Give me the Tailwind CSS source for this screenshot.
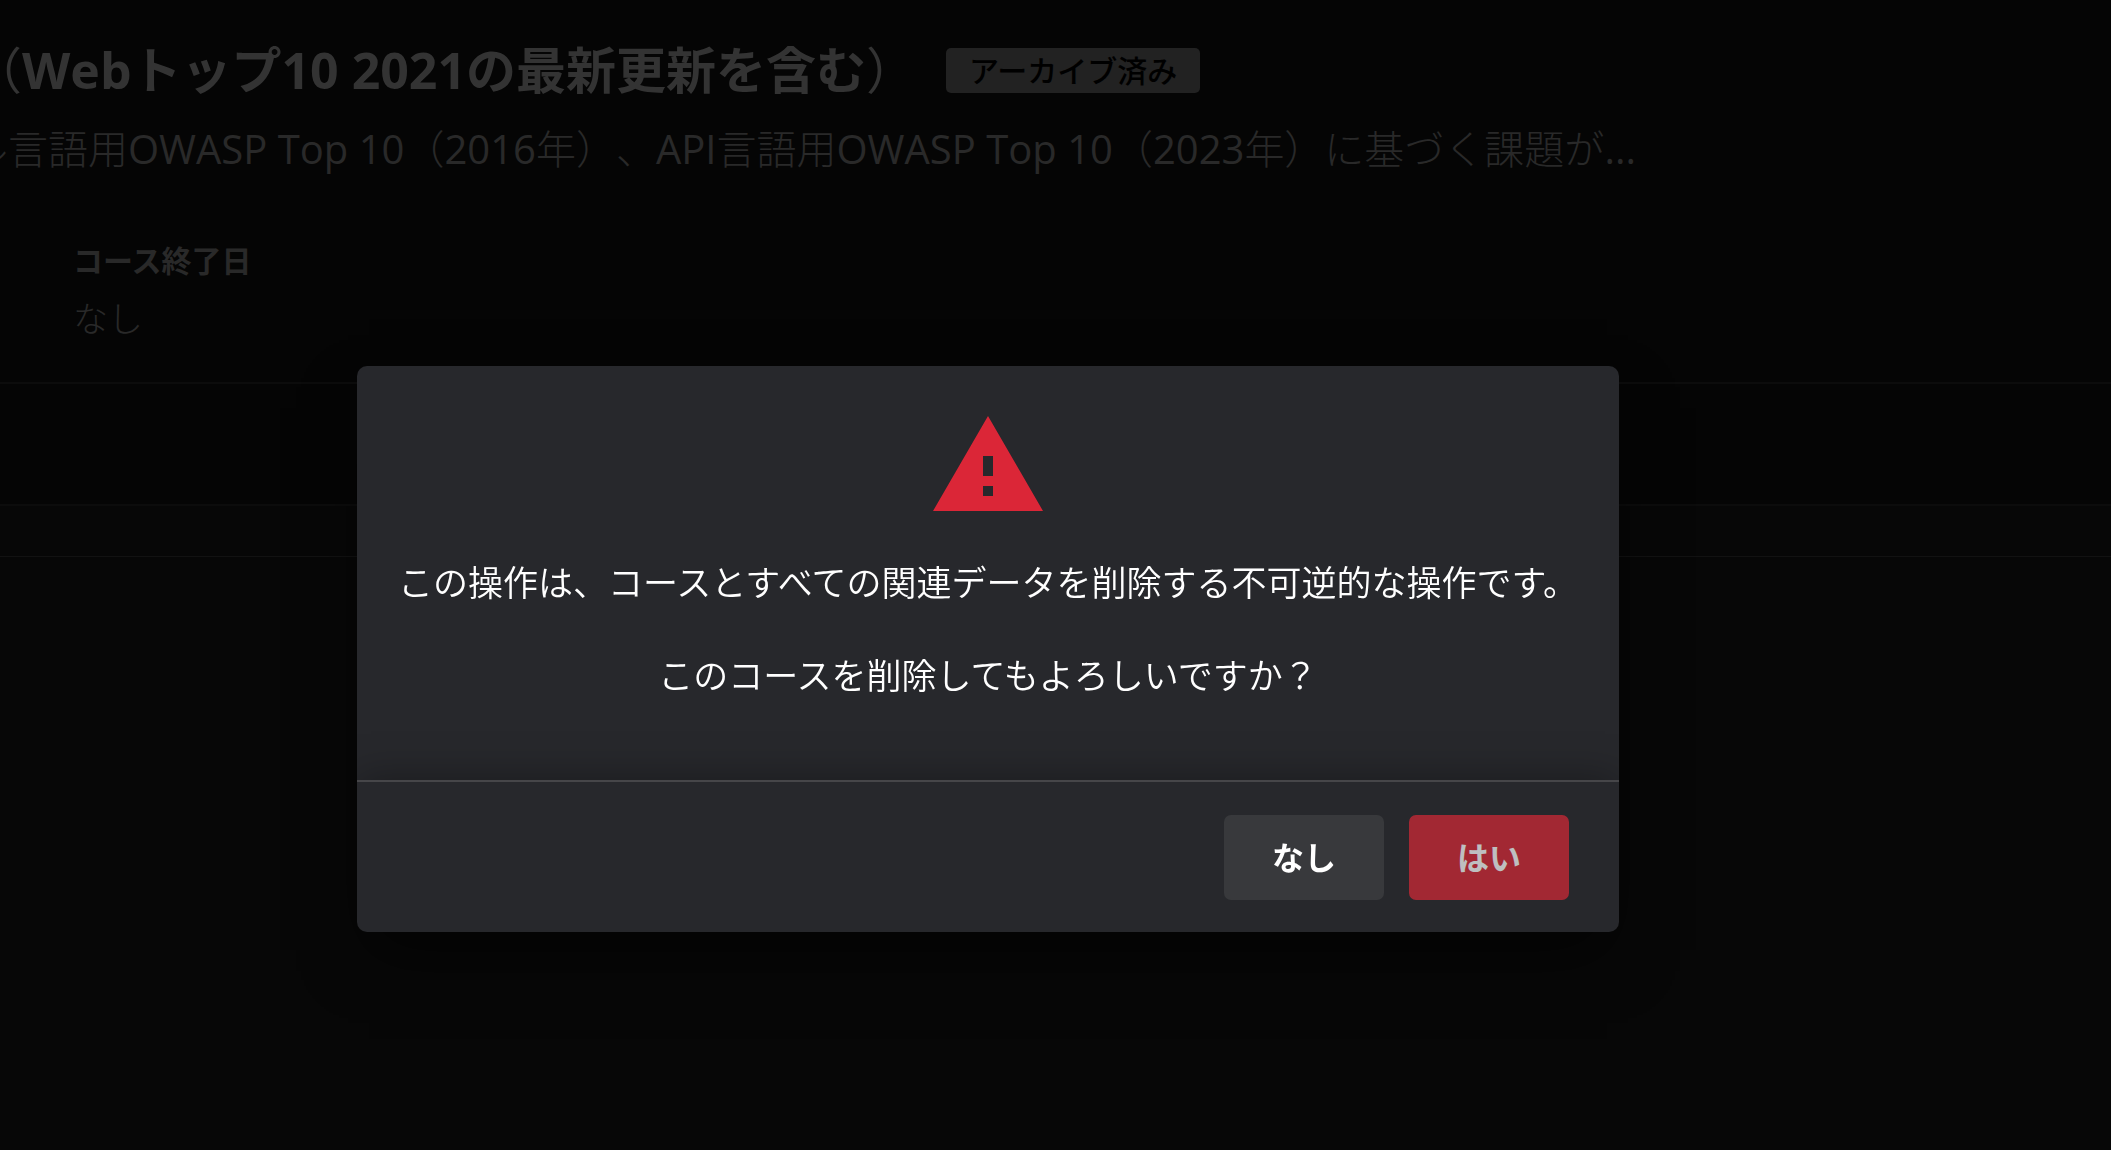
<!DOCTYPE html>
<html lang="ja">
<head>
    <meta charset="UTF-8">
    <meta name="viewport" content="width=device-width, initial-scale=1.0">
    <title>コースの削除</title>

    <!-- Tailwind CSS for styling -->
    <script src="https://cdn.jsdelivr.net/npm/@tailwindcss/browser@4"></script>
</head>
<body class="bg-[#070707] text-[#292929] min-h-screen overflow-x-hidden font-['Open_Sans','Noto_Sans_CJK_JP',sans-serif] [text-spacing-trim:space-all]">

    <!-- Course page behind the dialog -->
    <main>
        <header class="bg-[#050505] border-b-2 border-[#0c0c0c] pt-8 pb-[35px] overflow-hidden">
            <div class="flex items-center gap-[30px] h-[76px] -ml-7 text-[#333333]">
                <h1 class="text-[50px] leading-[76px] font-bold whitespace-nowrap"><span class="font-normal">（</span>Webトップ10 2021の最新更新を含む<span class="font-normal">）</span></h1>
                <span class="bg-[#222222] text-black text-[30px] leading-[45px] font-medium px-[23px] rounded-[5px] whitespace-nowrap">アーカイブ済み</span>
            </div>
            <p class="-ml-8 mt-[11px] text-[40px] leading-[60px] font-light whitespace-nowrap">ル言語用<span class="font-normal">OWASP Top 10</span>（<span class="font-normal">2016</span>年）、<span class="font-normal">API</span>言語用<span class="font-normal">OWASP Top 10</span>（<span class="font-normal">2023</span>年）に基づく課題が<span class="font-normal">...</span></p>
            <dl class="mt-[58px] ml-[73px]">
                <dt class="text-[30px] leading-[48px] font-bold">コース終了日</dt>
                <dd class="mt-1.5 text-[35px] leading-[56px] font-light">なし</dd>
            </dl>
        </header>
        <div class="h-[122px] bg-[#050505] border-b-2 border-[#0c0c0c]"></div>
        <div class="h-[51px] border-b border-[#121212]"></div>
    </main>

    <!-- Delete confirmation -->
    <div class="fixed inset-0 flex justify-center items-start pt-[366px] pr-[135px]">
        <div role="alertdialog" aria-modal="true" aria-describedby="delete-message" class="w-[1262px] max-w-full bg-[#27282c] text-white rounded-[10px] overflow-hidden shadow-[0_30px_60px_-12px_rgba(0,0,0,0.6)]">
            <div id="delete-message" class="flex flex-col items-center pt-10 pb-[78px] text-[35px] leading-[53px] font-[350] text-center">
                <svg class="size-[120px] text-[#db2637]" viewBox="0 0 24 24" fill="currentColor" aria-hidden="true">
                    <path d="M1 21h22L12 2 1 21zm12-3h-2v-2h2v2zm0-4h-2v-4h2v4z"/>
                </svg>
                <p class="mt-[30px] whitespace-nowrap">この操作は、コースとすべての関連データを削除する不可逆的な操作です。</p>
                <p class="mt-10 whitespace-nowrap">このコースを削除してもよろしいですか？</p>
            </div>
            <div class="flex justify-end gap-[25px] border-t-2 border-[#464649] pt-[33px] pb-8 px-[50px] shadow-[0_0_40px_rgba(0,0,0,0.35)]">
                <button type="button" class="w-[160px] h-[85px] rounded-[7px] bg-[#38393c] text-[32px] font-bold">なし</button>
                <button type="button" class="w-[160px] h-[85px] rounded-[7px] bg-[#d82837] text-[32px] font-bold opacity-70">はい</button>
            </div>
        </div>
    </div>

</body>
</html>
